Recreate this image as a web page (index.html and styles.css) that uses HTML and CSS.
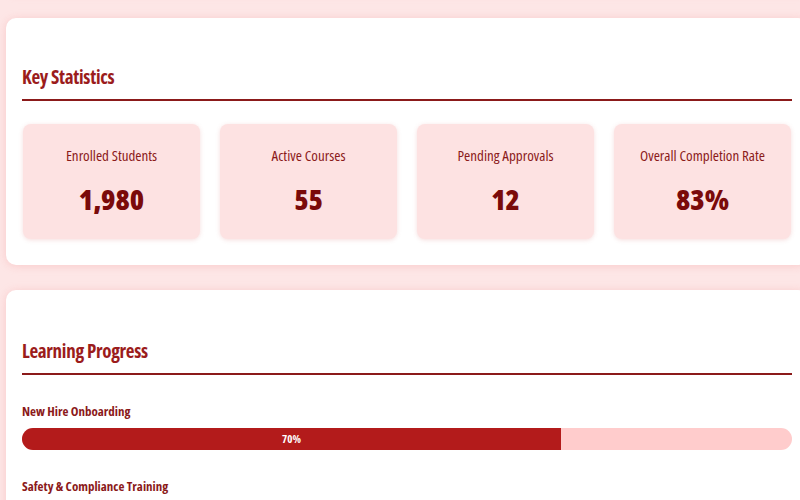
FILE: index.html
```html
<!DOCTYPE html>
<html lang="en">
<head>
    <meta charset="UTF-8">
    <meta name="viewport" content="width=device-width, initial-scale=1.0">
    <title>Training Dashboard</title>
    <link rel="stylesheet" href="styles.css">
</head>
<body>

    <div class="page">
        <div class="panel panel-prev"></div>

        <section class="panel">
            <h2 class="panel-title">Key Statistics</h2>
            <div class="stats">
                <div class="stat">
                    <div class="stat-label">Enrolled Students</div>
                    <div class="stat-value">1,980</div>
                </div>
                <div class="stat">
                    <div class="stat-label">Active Courses</div>
                    <div class="stat-value">55</div>
                </div>
                <div class="stat">
                    <div class="stat-label">Pending Approvals</div>
                    <div class="stat-value">12</div>
                </div>
                <div class="stat">
                    <div class="stat-label">Overall Completion Rate</div>
                    <div class="stat-value">83%</div>
                </div>
            </div>
        </section>

        <section class="panel panel-progress">
            <h2 class="panel-title">Learning Progress</h2>
            <div class="course">
                <div class="course-name">New Hire Onboarding</div>
                <div class="bar">
                    <div class="bar-fill" style="width: 70%">70%</div>
                </div>
            </div>
            <div class="course">
                <div class="course-name">Safety &amp; Compliance Training</div>
                <div class="bar">
                    <div class="bar-fill" style="width: 85%">85%</div>
                </div>
            </div>
        </section>
    </div>

</body>
</html>
```

FILE: styles.css
```css
html, body {
    overflow: hidden;
}

body {
    font-family: "Open Sans", "DejaVu Sans", sans-serif;
    font-stretch: condensed;
    background-color: #fde6e6;
    margin: 0;
    padding: 0;
}

.page {
    width: 802px;
    margin-left: 6px;
    margin-top: -207px;
    display: flex;
    flex-direction: column;
    gap: 25px;
}

.panel {
    background-color: #fff;
    border-radius: 10px;
    box-shadow: 0 1px 8px rgba(245, 160, 160, 0.4);
    padding: 46px 16px 26px;
}

.panel-prev {
    height: 200px;
    padding: 0;
}

.panel-progress {
    padding-top: 48px;
}

.panel-title {
    margin: 0 0 4px;
    font-size: 19px;
    font-weight: 700;
    letter-spacing: -0.3px;
    color: #9b1c1c;
    padding-bottom: 9px;
    border-bottom: 2px solid #8b1a1a;
}

.stats {
    display: grid;
    grid-template-columns: repeat(4, 177px);
    gap: 20px;
    margin-top: 23px;
    padding-left: 1px;
}

.stat {
    background-color: #fde2e2;
    border-radius: 8px;
    box-shadow: 0 1px 4px rgba(220, 120, 120, 0.25);
    height: 115px;
    text-align: center;
    box-sizing: border-box;
    padding-top: 21px;
}

.stat-label {
    font-size: 15px;
    font-weight: 500;
    color: #8b1a1a;
}

.stat-value {
    font-size: 29px;
    font-weight: 800;
    color: #7a0a0a;
    margin-top: 14px;
}

.course {
    margin-top: 27px;
}

.course-name {
    font-size: 13px;
    font-weight: 700;
    color: #8b1a1a;
    margin-bottom: 8px;
}

.bar {
    height: 22px;
    border-radius: 11px;
    background-color: #ffcccc;
    overflow: hidden;
}

.bar-fill {
    height: 100%;
    background-color: #b31b1b;
    color: #fff;
    font-size: 11px;
    font-weight: 700;
    line-height: 22px;
    text-align: center;
}
```
